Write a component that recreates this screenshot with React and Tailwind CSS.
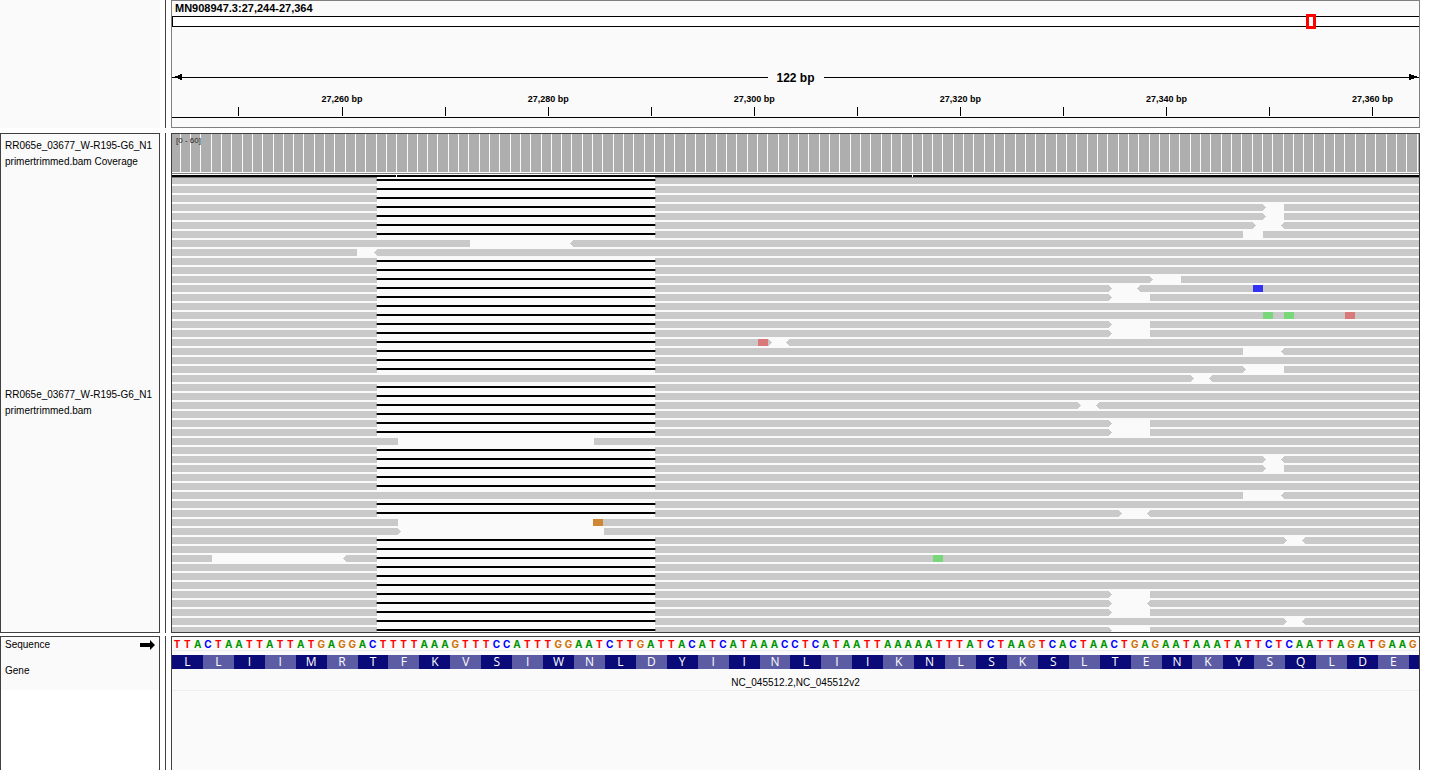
const BASES =
  'TTACTAATTATTATGAGGACTTTTAAAGTTTCCATTTGGAATCTTGATTACATCATAAACCTCATAATTAAAAATTTATCTAAGTCACTAACTGAGAATAAATATTCTCAATTAGATGAAG';
const AMINO_ACIDS = 'LLIIMRTFKVSIWNLDYIINLIIKNLSKSLTENKYSQLDE';

const BASE_CLASS = {
  A: 'text-[#009600]',
  C: 'text-[#0000ff]',
  G: 'text-[#d17105]',
  T: 'text-[#ff0000]',
};
const MISMATCH_FILL = { A: '#78d778', C: '#3232f0', G: '#d08733', T: '#d97979' };

const VIEW = 1247;
const ROWS = 51;
const PITCH = 9;

const DELETION = { from: 205, to: 483 };

// Gap between two reads on one row: [end of left read, left read points right,
// start of right read, right read points left]
const GAPS = {
  3: [[1091, true, 1112, false]],
  4: [[1091, true, 1112, false]],
  5: [[1081, true, 1112, true]],
  6: [[1071, false, 1091, false]],
  7: [[298, false, 401, true]],
  8: [[185, false, 205, true]],
  11: [[978, true, 1009, false]],
  12: [[937, true, 968, true]],
  13: [[937, true, 978, false]],
  16: [[937, true, 978, false]],
  17: [[937, true, 978, false]],
  18: [[597, true, 617, true]],
  19: [[1071, false, 1112, true]],
  21: [[1071, true, 1112, false]],
  22: [[1019, true, 1040, true]],
  25: [[906, true, 927, true]],
  27: [[937, true, 978, false]],
  28: [[937, true, 978, false]],
  29: [[226, false, 422, false]],
  31: [[1091, true, 1112, true]],
  32: [[1091, true, 1112, false]],
  35: [[1071, false, 1112, true]],
  37: [[947, true, 978, true]],
  38: [[226, false, 421, false]],
  39: [[226, true, 432, false]],
  40: [[1112, true, 1133, true]],
  42: [[40, false, 174, true]],
  46: [[937, true, 978, false]],
  47: [[937, true, 978, true]],
  48: [[937, true, 978, false]],
  49: [[1112, true, 1133, true]],
  50: [[937, true, 978, false]],
};

const UNSPLICED = new Set([7, 8, 22, 29, 35, 38, 39]);

const MISMATCHES = [
  { row: 12, x: 1081, base: 'C' },
  { row: 15, x: 1091, base: 'A' },
  { row: 15, x: 1112, base: 'A' },
  { row: 15, x: 1173, base: 'T' },
  { row: 18, x: 586, base: 'T' },
  { row: 38, x: 421, base: 'G' },
  { row: 42, x: 761, base: 'A' },
];

function readSegments(row) {
  const gaps = [...(GAPS[row] || [])];
  if (!UNSPLICED.has(row)) gaps.push([DELETION.from, false, DELETION.to, false]);
  gaps.sort((a, b) => a[0] - b[0]);
  const segments = [];
  let start = 0;
  let pointsLeft = false;
  for (const [end, right, next, left] of gaps) {
    segments.push({ start, end, pointsLeft, pointsRight: right });
    start = next;
    pointsLeft = left;
  }
  segments.push({ start, end: VIEW, pointsLeft, pointsRight: false });
  return segments;
}

function segmentPath({ start, end, pointsLeft, pointsRight }, y) {
  const left = pointsLeft ? `L${start - 3} ${y + 3.5}` : '';
  const right = pointsRight ? `L${end + 3} ${y + 3.5}` : '';
  return `M${start} ${y}H${end}${right}L${end} ${y + 7}H${start}${left}Z`;
}

function CoverageTrack() {
  return (
    <div className="relative">
      <svg
        className="block h-[41px] w-full"
        viewBox={`0 0 ${VIEW} 41`}
        preserveAspectRatio="none"
        shapeRendering="crispEdges"
        aria-hidden="true"
      >
        <rect width={VIEW} height="38" fill="#aeaeae" />
        {Array.from(BASES, (_, i) => (
          <rect
            key={i}
            x={Math.floor(((i + 1) * VIEW) / BASES.length) - 2}
            width="1"
            height="38"
            fill="#fafafa"
          />
        ))}
        <rect y="39" width={VIEW} height="1" fill="#808080" />
      </svg>
      <span className="absolute top-0.5 left-1 text-[8px] leading-[10px] text-[#222]">[0 - 60]</span>
    </div>
  );
}

function AlignmentTrack() {
  return (
    <svg
      className="block h-[457px] w-full"
      viewBox={`0 0 ${VIEW} 457`}
      preserveAspectRatio="none"
      shapeRendering="crispEdges"
      role="img"
      aria-label="Aligned reads"
    >
      {Array.from({ length: ROWS }, (_, row) => {
        const y = 2 + row * PITCH;
        return (
          <g key={row}>
            <path d={readSegments(row).map((s) => segmentPath(s, y)).join('')} fill="#c9c9c9" />
            {!UNSPLICED.has(row) && (
              <>
                <rect x={DELETION.from - 1} y={y + 2} width="280" height="2" fill="#808080" />
                <rect x={DELETION.from} y={y + 2} width="278" height="2" fill="#000" />
              </>
            )}
          </g>
        );
      })}
      {MISMATCHES.map(({ row, x, base }) => (
        <rect key={`${row}-${x}`} x={x} y={2 + row * PITCH} width="10" height="7" fill={MISMATCH_FILL[base]} />
      ))}
      <rect width={VIEW} height="2" fill="#000" />
      <path d="M0 2H205V3H0ZM483 2H1247V3H483Z" fill="#808080" />
      <path d="M224 0H225V3H224ZM740 0H741V2H740Z" fill="#fafafa" />
    </svg>
  );
}

function Ruler() {
  return (
    <div className="min-w-0 flex-1 border border-[#808080] bg-[#fafafa] pb-[9px]">
      <h1 className="pl-[3px] text-[11px] leading-[15px] font-bold">MN908947.3:27,244-27,364</h1>
      <div className="relative h-[11px] border-y border-l border-black bg-white">
        <span className="absolute -top-[3px] left-[90.9%] h-[15px] w-[10px] border-[3px] border-[#ff0000]" />
      </div>
      <div className="mt-[42px] flex h-[17px] items-center">
        <svg className="h-[7px] w-[10px]" viewBox="0 0 10 7" aria-hidden="true">
          <path d="M0 3H3V2H6V1H8V0H10V6H8V5H6V4H0Z" shapeRendering="crispEdges" />
        </svg>
        <span className="h-px flex-1 bg-black" />
        <span className="px-[9px] text-xs leading-4 font-bold">122 bp</span>
        <span className="h-px flex-1 bg-black" />
        <svg className="h-[7px] w-[10px]" viewBox="0 0 10 7" aria-hidden="true">
          <path d="M10 3H8V2H5V1H2V0H0V6H2V5H5V4H10Z" shapeRendering="crispEdges" />
        </svg>
      </div>
      <div className="mt-1.5 grid grid-cols-[13fr_40fr_40fr_40fr_40fr_40fr_11fr_18fr] text-center text-[9px] leading-[15px] font-bold whitespace-nowrap">
        <span className="col-start-2">27,260 bp</span>
        <span>27,280 bp</span>
        <span>27,300 bp</span>
        <span>27,320 bp</span>
        <span>27,340 bp</span>
        <span className="col-start-8">27,360 bp</span>
      </div>
      <svg
        className="block h-[11px] w-full"
        viewBox={`0 0 ${VIEW} 11`}
        preserveAspectRatio="none"
        shapeRendering="crispEdges"
        aria-hidden="true"
      >
        {Array.from({ length: 12 }, (_, i) => (
          <rect key={i} x={i === 0 ? 66 : 67 + i * 103} width="1" height="9" />
        ))}
        <rect y="10" width={VIEW} height="1" />
      </svg>
    </div>
  );
}

function Divider() {
  return <div className="mx-[5px] w-px shrink-0 bg-[#404040]" />;
}

function TrackName({ className, lines }) {
  return (
    <div className={`flex flex-col justify-center overflow-hidden pl-1 leading-4 whitespace-nowrap ${className}`}>
      {lines.map((line) => (
        <span key={line}>{line}</span>
      ))}
    </div>
  );
}

export default function App() {
  return (
    <main className="flex min-h-screen flex-col bg-white pr-[17px] font-['Liberation_Sans',Arial,sans-serif] text-[10px] text-black">
      <section className="mb-[5px] flex">
        <div className="w-40 shrink-0 bg-[#fafafa]" />
        <Divider />
        <Ruler />
      </section>

      <section className="mb-[3px] flex">
        <div className="flex w-40 shrink-0 flex-col border border-[#404040] bg-[#fafafa]">
          <TrackName className="h-10" lines={['RR065e_03677_W-R195-G6_N1', 'primertrimmed.bam Coverage']} />
          <TrackName className="flex-1" lines={['RR065e_03677_W-R195-G6_N1', 'primertrimmed.bam']} />
        </div>
        <Divider />
        <div className="min-w-0 flex-1 border border-[#404040] bg-[#fafafa]">
          <CoverageTrack />
          <AlignmentTrack />
        </div>
      </section>

      <section className="flex flex-1">
        <div className="w-40 shrink-0 border-x border-t border-[#404040]">
          <div className="h-[53px] bg-[#fafafa] pr-1 pl-1 leading-4">
            <div className="flex h-4 items-center justify-between">
              <span>Sequence</span>
              <svg className="h-[10px] w-[15px]" viewBox="0 0 15 10" aria-hidden="true">
                <path d="M0 3H10V0L15 5L10 10V7H0Z" />
              </svg>
            </div>
            <div className="pt-2.5">Gene</div>
          </div>
        </div>
        <Divider />
        <div className="min-w-0 flex-1 border-x border-t border-[#404040] bg-[#fafafa]">
          <div className="mb-1 flex border-b border-[#eeeeee] pr-0.5 text-center font-['Inter','Liberation_Sans',sans-serif] leading-[13px] font-bold">
            {Array.from(BASES, (base, i) => (
              <span key={i} className={`h-[13px] min-w-0 flex-1 pt-px ${BASE_CLASS[base]}`}>
                {base}
              </span>
            ))}
          </div>
          <div className="flex h-[14px] bg-[#0a0a78] text-center font-['Open_Sans','Noto_Sans',sans-serif] text-xs leading-[14px] text-white">
            {Array.from(AMINO_ACIDS, (aminoAcid, i) => (
              <span key={i} className={`min-w-0 flex-[3] ${i % 2 ? 'bg-[#5c5ca4]' : ''}`}>
                {aminoAcid}
              </span>
            ))}
            <span className="min-w-0 flex-1" />
          </div>
          <div className="border-b border-[#eeeeee] pt-[7px] text-center leading-[14px]">
            NC_045512.2,NC_045512v2
          </div>
        </div>
      </section>
    </main>
  );
}
